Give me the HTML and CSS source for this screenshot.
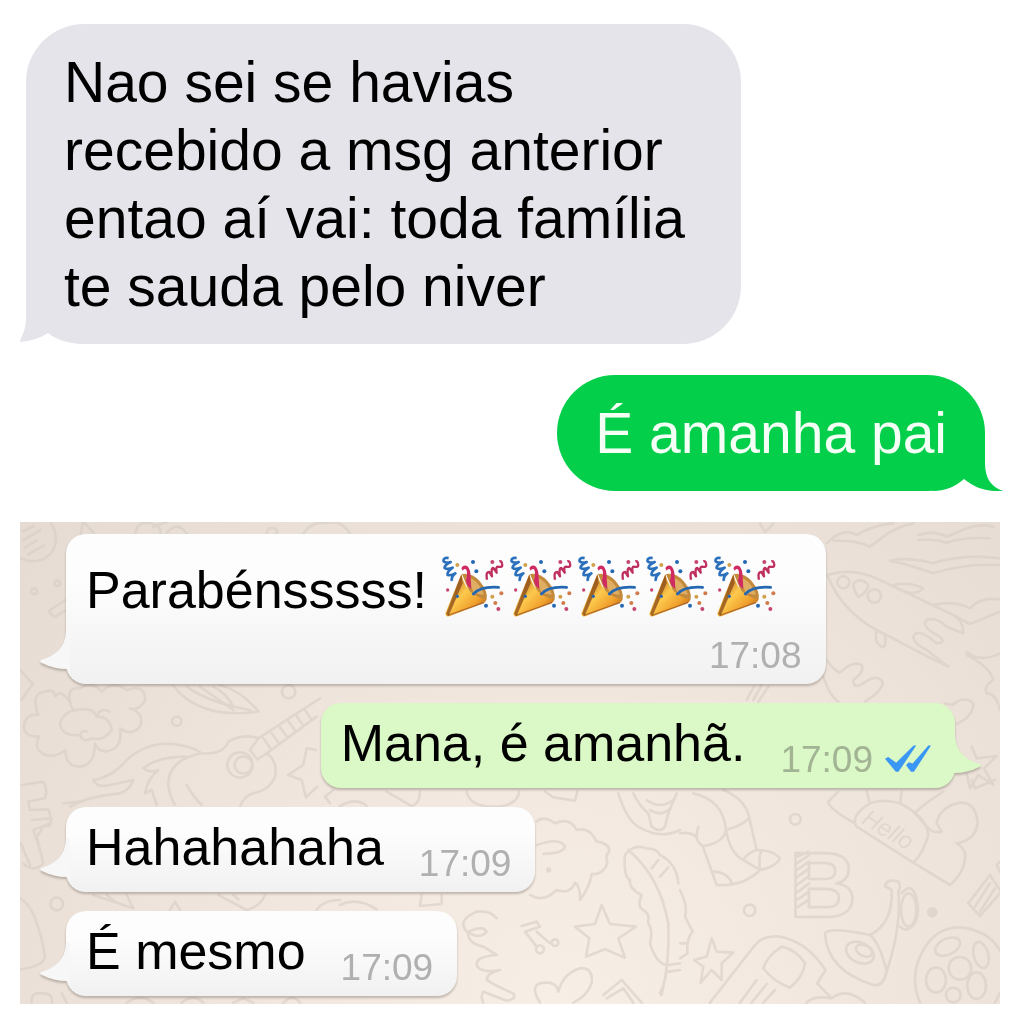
FILE: index.html
```
<!DOCTYPE html>
<html lang="pt">
<head>
    <meta charset="UTF-8">
    <meta name="viewport" content="width=device-width, initial-scale=1.0">
    <title>Mensagens</title>
    <link rel="stylesheet" href="styles.css">
</head>
<body>
    <!-- shared drawings -->
    <svg class="defs" aria-hidden="true">
        <defs>
            <linearGradient id="gold" x1="0" y1="0" x2="1" y2="1">
                <stop offset="0.1" stop-color="#b5651a"/>
                <stop offset="0.45" stop-color="#fdc94e"/>
                <stop offset="0.7" stop-color="#f0a02c"/>
                <stop offset="1" stop-color="#8a3f10"/>
            </linearGradient>
            <symbol id="popper" viewBox="12 18 186 186">
                <path d="M72 72Q100 66 124 92Q150 122 146 146L138 158L100 140Z" fill="#c48a3c"/>
                <path d="M84 80Q118 84 138 134L108 130Z" fill="#dfae62"/>
                <path d="M70 72Q78 112 108 134Q126 146 146 148Q144 156 134 160L34 199Q22 201 22 190Z" fill="url(#gold)"/>
                <path d="M70 74L24 192L32 197L74 100Z" fill="#8a4a18" opacity=".75"/>
                <path d="M28 197L138 158" stroke="#8a4212" stroke-width="4" opacity=".6"/>
                <path d="M70 54Q78 42 90 50Q98 60 98 82L100 116Q88 112 84 94Q90 66 84 58Q78 54 74 62Z" fill="#d02a62"/>
                <path d="M106 132Q128 108 182 112" fill="none" stroke="#2468b4" stroke-width="8" stroke-linecap="round"/>
                <path d="M32 24Q14 22 17 34Q22 40 38 36Q18 46 20 54Q28 60 44 53Q26 66 29 75Q38 78 52 70Q38 82 42 93" fill="none" stroke="#2a70bd" stroke-width="8" stroke-linejoin="round"/>
                <path d="M147 89Q142 66 154 66L162 79Q158 54 166 54L176 68Q172 50 180 50Q196 54 192 40Q190 32 184 34" fill="none" stroke="#c0305f" stroke-width="7" stroke-linejoin="round"/>
                <g fill="#2468b4"><circle cx="105" cy="36" r="6"/><circle cx="115" cy="64" r="6"/><circle cx="58" cy="139" r="5"/><circle cx="144" cy="167" r="6"/></g>
                <g fill="#c6466e"><circle cx="163" cy="36" r="6"/><circle cx="29" cy="120" r="5"/><circle cx="181" cy="177" r="6"/></g>
                <g fill="#d0a04a"><circle cx="58" cy="45" r="6"/><circle cx="163" cy="140" r="6"/></g>
                <g fill="#d07a4a"><circle cx="190" cy="130" r="6"/><circle cx="172" cy="159" r="6"/></g>
            </symbol>
            <symbol id="wa-tail" viewBox="0 0 30 44">
                <path d="M26 0V2C25 17 16 26 1 30Q-1 32 2 33C10 37 18 39 27 39L30 44V0Z"/>
            </symbol>
        </defs>
    </svg>

    <main class="page">
        <div class="sms sms-in">
            <p>Nao sei se havias recebido a msg anterior entao aí vai: toda família te sauda pelo niver</p>
            <svg class="sms-tail" viewBox="0 0 70 70" aria-hidden="true">
                <path d="M6 12V44C6 58 0 64 0 68Q16 67 28 59C38 67 50 70 70 70V12Z"/>
            </svg>
        </div>

        <div class="sms sms-out">
            <p>É amanha pai</p>
            <svg class="sms-tail" viewBox="0 0 70 70" aria-hidden="true">
                <path d="M52 12V42C52 57 58 66 70 70C54 71 42 67 31 58C22 66 12 70 0 70V12Z"/>
            </svg>
        </div>

        <section class="chat">
            <svg class="doodles" viewBox="20 522 980 482" preserveAspectRatio="xMidYMid slice" aria-hidden="true">
                <!-- top left: ball, flower, guitar -->
                <g transform="translate(20 520) scale(.3333)">
                    <path d="M88 0Q125 60 92 100Q58 138 0 115M8 34L40 18M10 60L62 30M14 84L48 62M24 104L72 76"/>
                    <path d="M182 44L190 5L222 40M345 44Q350 5 385 8Q430 20 420 44M400 20L440 6M440 40Q470 0 500 40M740 42Q740 20 762 24Q780 34 764 44M850 40Q880 0 920 10Q960 -4 990 40"/>
                    <circle cx="42" cy="214" r="9"/><circle cx="112" cy="190" r="8"/>
                    <path d="M136 240L88 272Q92 288 106 290L136 272"/>
                    <path d="M0 450L38 492L4 540"/>
                    <path d="M150 545Q140 500 180 505Q215 480 245 515Q280 480 320 510Q380 490 374 545Q350 575 330 565Q375 580 360 620Q335 650 300 625Q310 690 255 694Q230 690 225 670Q225 735 180 740Q135 740 137 690Q90 725 55 690Q45 670 58 650Q0 650 15 605Q25 580 55 585Q30 520 75 515Q105 505 105 530Q120 505 150 545Z"/>
                    <path d="M150 545Q155 575 170 570Q220 560 230 590Q270 590 275 630Q250 665 215 655Q190 670 180 645Q125 650 120 610Q130 575 170 570M230 590Q240 560 270 575M180 645Q185 630 200 635"/>
                    <path d="M460 496Q500 555 590 575Q660 585 716 574Q660 510 600 496M500 500Q570 550 690 570M540 500L640 570M580 500Q620 520 640 560"/>
                    <circle cx="470" cy="604" r="14"/><circle cx="806" cy="515" r="20"/>
                    <path d="M220 780Q280 770 320 720Q380 665 460 672Q520 680 545 700Q610 705 625 665Q670 640 715 655L900 535M740 700L890 590M715 655L690 690L712 718L740 700Q775 725 765 770Q750 810 700 820Q670 830 660 860M545 700Q440 720 445 800Q450 830 465 855"/>
                    <path d="M220 780Q230 805 270 795L340 780Q330 810 300 820Q200 830 150 860M500 710Q410 710 370 745Q390 760 415 750Q380 780 375 820L395 810L410 855M500 795Q520 830 545 855"/>
                    <circle cx="660" cy="735" r="38"/><circle cx="670" cy="735" r="26"/>
                    <path d="M730 655L752 686M755 640L777 670M780 622L802 652M805 604L827 634M830 588L850 617M855 570L875 600"/>
                    <path d="M888 690L860 685L850 735L805 765L845 780L858 832L892 800M940 810L915 830L930 850"/>
                    <path d="M5 795L70 785Q85 810 75 835L25 845L30 870L85 868Q95 890 90 910L40 930L60 990M130 850L180 845"/>
                </g>

                <!-- top right: rocket, clouds, star -->
                <g transform="translate(680 520) scale(.3333)">
                    <path d="M240 10L255 36L280 12M440 70Q490 20 530 45Q580 15 640 10M460 62Q530 60 570 80L610 50Q650 20 700 10M715 45Q760 30 800 50L860 25Q900 10 940 20M715 60Q760 55 800 68Q850 50 930 55M630 122Q680 110 760 130Q850 100 960 115M630 122Q690 135 760 160Q850 130 960 135"/>
                    <path d="M442 165Q520 140 600 180L820 285Q850 300 850 340L800 320Q770 290 740 300Q720 320 780 350Q800 370 770 370Q710 320 700 350Q700 370 740 390L805 440Q740 410 630 350Q490 290 442 165Z"/>
                    <circle cx="490" cy="187" r="18"/><path d="M520 190Q545 170 565 195Q560 220 535 230Q520 210 520 190Z"/><circle cx="583" cy="228" r="20"/>
                    <path d="M640 195Q690 185 730 205Q710 225 675 215M590 335Q580 370 610 382Q620 370 615 345M760 255Q820 240 870 265Q900 230 960 238M830 290L870 312L960 275M860 395Q900 430 960 400M860 405Q930 440 940 480Q910 500 920 520Q950 520 960 570"/>
                    <path d="M440 420Q460 450 480 458Q520 420 545 435Q555 455 520 480Q520 510 550 490Q590 460 608 485Q610 510 555 545M430 470Q450 530 475 545M220 540L245 495M200 540L222 500M235 545L265 500"/>
                    <path d="M795 550Q820 560 830 545Q860 530 880 550Q880 590 830 612M875 680L890 715L950 708L912 745L940 795L895 765L870 805L860 762"/>
                </g>

                <!-- left edge and the gap between the last two bubbles -->
                <g transform="translate(0 780) scale(.3333)">
                    <path d="M70 250Q100 280 130 250L110 170L130 140L150 138L155 115L95 120M62 190L90 255M60 355Q110 380 135 530Q130 560 60 568"/>
                    <circle cx="170" cy="372" r="19"/>
                    <path d="M280 345L400 385L380 345M320 345L345 365M655 345L740 390Q780 380 795 345M700 345L715 358M510 390L525 365L540 390M950 390Q970 360 1020 360M95 668Q90 635 130 640Q160 640 155 668M185 640L200 668M380 668Q420 640 460 668M545 668Q580 640 610 668M700 668L730 655L760 668M850 668Q880 640 900 668"/>
                </g>

                <!-- bottom middle: speech cloud, leaf, star, heart -->
                <g transform="translate(340 780) scale(.3333)">
                    <path d="M0 78Q50 50 80 78M140 35L215 78Q240 70 240 35M380 35Q390 80 460 80Q530 80 538 35M615 35L640 52L705 62L712 35"/>
                    <path d="M590 125Q610 105 645 130Q690 110 710 150Q750 140 770 185Q810 190 808 215Q795 225 802 250Q790 285 755 282Q750 320 720 360Q722 320 705 308Q690 345 650 330Q610 370 570 345M590 195Q660 170 675 200Q670 220 610 222"/>
                    <circle cx="626" cy="270" r="4"/>
                    <path d="M785 375L810 432L888 440L835 475L855 533L795 508L738 530L748 475L705 440L765 432Z"/>
                    <path d="M835 40Q860 120 895 140Q960 180 1020 150M880 40Q900 80 925 100L935 140Q960 160 975 140L985 100L1010 40M920 60Q960 90 1000 60M930 90Q960 110 985 90"/>
                    <path d="M855 225Q880 190 920 205Q950 205 960 225Q1010 250 1015 310M855 225Q850 290 870 300Q865 325 905 345Q890 380 910 390Q930 400 925 430Q940 450 930 490Q950 555 985 555L1020 550M865 210Q960 290 985 430Q990 540 965 645L960 640Q980 600 980 555M935 265L955 240M960 290L985 262M985 575L1020 570"/>
                    <path d="M470 415Q450 390 410 395Q350 420 380 455Q420 480 440 455Q430 435 385 455Q380 490 430 500L470 525Q400 530 412 560Q430 580 480 570Q440 580 440 600Q470 620 520 640Q530 660 500 662L430 635Q420 650 430 668"/>
                    <path d="M545 438L590 425L600 440L555 455L590 500M590 455L630 490"/><circle cx="600" cy="508" r="12"/><circle cx="645" cy="488" r="10"/>
                    <path d="M600 668Q570 620 600 610Q650 600 655 635Q670 580 720 565Q760 560 755 610Q740 650 700 668M790 645L845 600L905 668M800 655L850 625L880 668"/>
                    <path d="M245 345L240 378L305 372V345M0 375Q50 350 110 388"/>
                </g>

                <!-- bottom right: legs, letter, horn, ladybird -->
                <g transform="translate(680 780) scale(.3333)">
                    <path d="M40 40Q130 60 138 150Q130 190 68 198Q40 180 55 140M0 160Q30 155 48 170M68 198L110 315Q190 320 240 270L190 240Q150 220 138 150Q180 140 208 115L230 210Q200 220 190 240M130 30Q200 60 208 115M230 210Q280 210 300 235Q290 260 240 270Q235 230 245 212M100 275Q140 275 155 308"/>
                    <circle cx="346" cy="118" r="16"/><circle cx="209" cy="391" r="17"/><circle cx="757" cy="397" r="12" class="dot"/>
                    <path d="M475 35L445 65Q445 85 525 130Q520 100 570 70L560 35M570 70Q610 55 660 70L665 35M660 70Q740 110 745 165Q730 220 700 248L530 140L525 130M700 248L810 315Q860 270 855 220Q850 200 830 190Q890 180 893 125Q885 65 840 68Q780 80 770 130L785 155Q760 160 745 145L705 100Q720 80 790 35"/>
                    <text class="hello" transform="rotate(31 560 120)" x="548" y="136">Hello</text>
                    <text class="initial" x="328" y="410">B</text>
                    <path d="M350 230L385 215M350 250L388 225M350 270L388 245M350 292L388 265M350 315L388 288M350 338L388 310M350 360L388 335M352 382L388 358"/>
                    <path d="M435 460Q450 440 570 465Q640 430 635 330L615 318Q620 295 655 305Q665 320 655 335Q665 440 620 575Q610 620 580 615Q440 570 435 460ZM570 465Q600 490 620 575M665 340Q690 310 705 340Q725 400 700 435Q680 460 660 440"/>
                    <ellipse cx="686" cy="390" rx="23" ry="50"/><ellipse cx="540" cy="518" rx="44" ry="30" transform="rotate(25 540 518)"/><ellipse cx="552" cy="512" rx="26" ry="16" transform="rotate(25 552 512)"/>
                    <path d="M90 668L225 495Q250 465 300 470Q380 485 437 570L412 610L455 655Q500 620 555 668M380 668Q400 645 455 655M305 500Q350 510 375 550Q370 590 330 623Q280 605 250 565Q260 530 305 500ZM180 668L230 600M215 668L260 612M250 668L285 630"/>
                    <path d="M95 475L110 515L160 518L125 550L125 600L95 570L62 608L70 560L42 540L80 530ZM0 330Q25 380 15 410L38 455Q20 470 22 520L0 535M0 490L20 490"/>
                    <path d="M720 668Q690 600 720 530Q760 440 840 442Q930 450 965 520M945 668L965 630"/>
                    <ellipse cx="803" cy="500" rx="40" ry="24" transform="rotate(-25 803 500)"/><ellipse cx="903" cy="525" rx="22" ry="40" transform="rotate(-15 903 525)"/><ellipse cx="840" cy="565" rx="34" ry="34"/><ellipse cx="768" cy="600" rx="30" ry="38"/><ellipse cx="890" cy="617" rx="28" ry="40"/><circle cx="820" cy="645" r="22"/>
                    <path d="M865 370L930 285L960 330M865 370L900 408L960 340M885 380L930 310M900 395L945 325M875 0L885 25L945 0M960 245L950 255L960 275"/>
                </g>
            </svg>

            <div class="msg msg-in msg-tall">
                <svg class="wa-tail" aria-hidden="true"><use href="#wa-tail"/></svg>
                <p class="text">Parabénsssss! <span class="poppers" role="img" aria-label="festa"><svg><use href="#popper"/></svg><svg><use href="#popper"/></svg><svg><use href="#popper"/></svg><svg><use href="#popper"/></svg><svg><use href="#popper"/></svg></span></p>
                <time class="time">17:08</time>
            </div>

            <div class="msg msg-out">
                <svg class="wa-tail" aria-hidden="true"><use href="#wa-tail"/></svg>
                <p class="text">Mana, é amanhã.</p>
                <div class="status">
                    <time class="time">17:09</time>
                    <svg class="ticks" viewBox="618 670 140 96" aria-hidden="true">
                        <path d="M618 714L628 709L652 726L705 674L713 674L659 754L651 754Z"/>
                        <path d="M682 734L690 725L702 729L750 674L758 674L706 754L697 754Z"/>
                    </svg>
                </div>
            </div>

            <div class="msg msg-in">
                <svg class="wa-tail" aria-hidden="true"><use href="#wa-tail"/></svg>
                <p class="text">Hahahahaha</p>
                <time class="time">17:09</time>
            </div>

            <div class="msg msg-in">
                <svg class="wa-tail" aria-hidden="true"><use href="#wa-tail"/></svg>
                <p class="text">É mesmo</p>
                <time class="time">17:09</time>
            </div>
        </section>
    </main>
</body>
</html>
```
FILE: styles.css
```
* {
    margin: 0;
    padding: 0;
    box-sizing: border-box;
}

body {
    background: #fff;
    color: #000;
    font-family: "Liberation Sans", Arial, sans-serif;
}

.defs {
    position: absolute;
    width: 0;
    height: 0;
}

.page {
    display: flex;
    flex-direction: column;
    padding: 24px 24px 20px 20px;
}

/* sms bubbles */
.sms {
    position: relative;
    max-width: 73%;
    padding: 24px 38px;
    border-radius: 58px;
    font-size: 57px;
    line-height: 68px;
}

.sms p {
    position: relative;
    z-index: 1;
}

.sms-in {
    align-self: flex-start;
    margin-left: 6px;
    background: #e6e4eb;
}

.sms-out {
    align-self: flex-end;
    margin: 31px 15px 0 0;
    background: #03cf4a;
    color: #f4fff6;
}

.sms-tail {
    position: absolute;
    bottom: 0;
    width: 70px;
    height: 70px;
}

.sms-in .sms-tail {
    left: -6px;
    fill: #e6e4eb;
}

.sms-out .sms-tail {
    right: -18px;
    fill: #03cf4a;
}

/* chat panel */
.chat {
    position: relative;
    display: flex;
    flex-direction: column;
    align-items: flex-start;
    gap: 19px;
    margin-top: 31px;
    padding: 12px 45px 8px 46px;
    overflow: hidden;
    background: radial-gradient(circle at 55% 100%, #f7eee5 0%, #f0e6dd 45%, #e5dbd2 100%);
}

.doodles {
    position: absolute;
    inset: 0;
    width: 100%;
    height: 100%;
    fill: none;
    stroke: #d8cec5;
    stroke-width: 8px;
    stroke-linejoin: round;
    stroke-linecap: round;
    opacity: 0.6;
}

.doodles .dot {
    fill: #d8cec5;
}

.hello {
    font-size: 72px;
    font-style: italic;
    fill: #d8cec5;
    stroke: none;
}

.initial {
    font-size: 280px;
    font-weight: bold;
}

.msg {
    position: relative;
    display: flex;
    align-items: flex-end;
    gap: 35px;
    min-height: 85px;
    padding: 10px 24px 8px 20px;
    border-radius: 20px;
    filter: drop-shadow(0 2px 1px rgba(90, 80, 70, 0.35));
}

.msg-in {
    background: linear-gradient(#fdfdfd 30%, #f1f1f2);
    fill: #f7f7f7;
}

.msg-out {
    align-self: flex-end;
    background: #dbf8c7;
    fill: #dbf8c7;
}

.msg-tall {
    flex-direction: column;
    gap: 0;
}

.text {
    align-self: flex-start;
    font-size: 52px;
    line-height: 60px;
}

.msg-tall .text {
    padding-right: 26px;
    line-height: 92px;
}

.time {
    font-size: 37px;
    line-height: 40px;
    color: #b0b0b0;
}

.msg-out .time {
    color: #a2b494;
}

.status {
    display: flex;
    align-items: center;
    gap: 12px;
}

.ticks {
    width: 46px;
    height: 32px;
    fill: #3a97f4;
}

.wa-tail {
    position: absolute;
    left: -26px;
    bottom: 10px;
    width: 30px;
    height: 44px;
}

.msg-out .wa-tail {
    left: auto;
    right: -26px;
    transform: scaleX(-1);
}

.poppers {
    display: inline-flex;
    gap: 6px;
    padding-bottom: 14px;
    vertical-align: middle;
}

.poppers svg {
    width: 62px;
    height: 62px;
}
```
